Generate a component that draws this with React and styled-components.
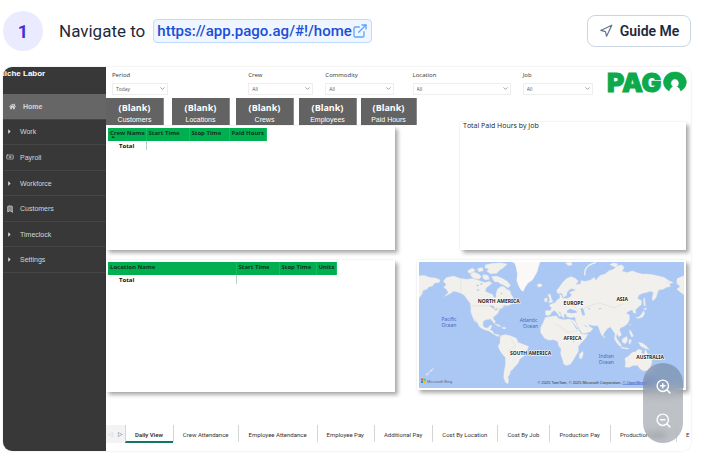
import styled, { createGlobalStyle } from "styled-components";
import { ExternalLink, Navigation, ZoomIn, ZoomOut, Bookmark, Banknote, ChevronDown } from "lucide-react";
import { FaHome, FaCaretRight } from "react-icons/fa";

const GlobalStyle = createGlobalStyle`
  * { box-sizing: border-box; }
  body {
    margin: 0;
    background: #fff;
    font-family: Roboto, "Liberation Sans", sans-serif;
  }
  button, select { font-family: inherit; }
`;

const Page = styled.main`
  padding: 11px 14px 12px 3px;
`;

const StepHeader = styled.header`
  display: flex;
  align-items: center;
  height: 40px;
  margin-bottom: 16px;
`;

const StepNumber = styled.span`
  display: flex;
  align-items: center;
  justify-content: center;
  width: 40px;
  height: 40px;
  border-radius: 50%;
  background: #ebebff;
  color: #4330d8;
  font-size: 18px;
  font-weight: 700;
`;

const StepTitle = styled.h1`
  flex: 1;
  display: flex;
  align-items: center;
  gap: 8px;
  margin: 0 0 0 16px;
  color: #1e293b;
  font-size: 17px;
  font-weight: 400;
`;

const UrlLink = styled.a`
  display: flex;
  align-items: center;
  height: 24px;
  padding: 0 3px;
  border: 1px solid #bfdbfe;
  border-radius: 4px;
  background: #eff6ff;
  color: #1d4ed8;
  font-size: 15px;
  font-weight: 500;
  text-decoration: none;

  svg { color: #60a5fa; }
`;

const GuideButton = styled.button`
  display: flex;
  align-items: center;
  justify-content: center;
  gap: 7px;
  width: 104px;
  height: 32px;
  padding: 0;
  border: 1px solid #cbd5e1;
  border-radius: 8px;
  background: #fff;
  color: #1e293b;
  font-size: 14px;
  font-weight: 600;

  svg { color: #64748b; }
`;

const Shot = styled.section`
  position: relative;
  display: flex;
  border-radius: 9px;
  overflow: hidden;
  box-shadow: 0 0 2px rgba(0, 0, 0, 0.15);
`;

const Sidebar = styled.nav`
  flex: none;
  width: 103px;
  background: #383838;
  font-family: "Liberation Sans", Arial, sans-serif;
`;

const Company = styled.div`
  height: 27px;
  margin-left: -4px;
  padding-top: 2px;
  color: #fff;
  font-size: 8px;
  font-weight: 700;
  line-height: 9px;
`;

const Menu = styled.ul`
  display: flex;
  flex-direction: column;
  height: 179px;
  margin: 0;
  padding: 0;
  list-style: none;
`;

const MenuItem = styled.li`
  flex: 1;
  border-bottom: 1px solid #454545;
  background: ${(p) => (p.$active ? "#666" : "transparent")};
`;

const MenuLink = styled.a`
  display: flex;
  align-items: center;
  gap: 6px;
  height: 100%;
  padding-left: ${(p) => (p.$active ? "6px" : "3px")};
  color: #d6d6d6;
  font-size: 7px;
  font-weight: ${(p) => (p.$active ? 700 : 400)};
  text-decoration: none;
`;

const MenuIcon = styled.span`
  display: flex;
  width: 8px;
`;

const Report = styled.div`
  flex: 1;
  min-width: 0;
  display: flex;
  flex-direction: column;
  background: #fff;
  font-family: "Open Sans", "Noto Sans", sans-serif;
`;

const Slicers = styled.div`
  display: grid;
  grid-template-columns: 136fr 77fr 87fr 110fr 85fr 78fr;
  height: 31px;
  padding: 4px 5px 0 6px;
`;

const Slicer = styled.label`
  display: block;
  position: relative;
  width: ${(p) => p.$width};
  color: #333;
  font-size: 6px;
  line-height: 9px;

  svg {
    position: absolute;
    right: 2px;
    bottom: 6px;
    pointer-events: none;
  }
`;

const SlicerSelect = styled.select`
  display: block;
  width: 100%;
  height: 12px;
  margin-top: 3px;
  padding: 0 3px;
  appearance: none;
  border: 1px solid #eee;
  border-radius: 0;
  background: #fff;
  color: #555;
  font-size: 5px;
`;

const Body = styled.div`
  display: grid;
  grid-template-columns: 311fr 274fr;
`;

const Column = styled.div`
  display: flex;
  flex-direction: column;
  gap: 10px;
`;

const RightColumn = styled(Column)`
  padding: 24px 5px 0 0;
`;

const Tiles = styled.div`
  display: grid;
  grid-template-columns: 66fr 64fr 63fr 62fr 56fr;
  margin-bottom: -9px;
`;

const Tile = styled.div`
  display: flex;
  flex-direction: column;
  align-items: center;
  max-width: 58px;
  height: 27px;
  padding-top: 3px;
  border-right: 1px solid #8a8a8a;
  background: #636363;
  color: #fff;
  font-family: "Liberation Sans", Arial, sans-serif;
  font-size: 7px;
  line-height: 11px;
  overflow: hidden;

  strong {
    font-family: "Open Sans", sans-serif;
    font-size: 9px;
    line-height: 13px;
  }
`;

const Panel = styled.div`
  width: ${(p) => p.$width || "100%"};
  height: ${(p) => p.$height || "auto"};
  padding: 2px;
  background: #fff;
  box-shadow: 3px 3px 4px rgba(0, 0, 0, 0.32), 0 0 2px rgba(0, 0, 0, 0.1);
`;

const ChartPanel = styled(Panel)`
  align-self: flex-end;
  padding: 0 3px;
`;

const ChartTitle = styled.h2`
  margin: 0;
  color: #222;
  font-size: 7px;
  font-weight: 400;
  line-height: 8px;
`;

const DataTable = styled.table`
  border-collapse: collapse;
  table-layout: fixed;
  width: ${(p) => p.$width};
  color: #111;
  font-size: 6px;
  line-height: 8px;
`;

const HeadCell = styled.th`
  width: ${(p) => p.$width};
  height: 13px;
  padding: 1px 2px;
  border-right: 1px solid #12bb5e;
  background: #00b050;
  color: #12351f;
  text-align: left;
  vertical-align: top;
  white-space: nowrap;
`;

const SortMark = styled.span`
  display: block;
  width: 0;
  margin-top: -1px;
  margin-left: 1px;
  border: 2px solid transparent;
  border-top: 0;
  border-bottom-color: #12351f;
`;

const TotalCell = styled.th`
  height: 9px;
  padding: 0 0 0 11px;
  border-right: 1px solid #b8d4c4;
  text-align: left;
`;

const Logo = styled.svg`
  display: block;
  width: 100%;
  overflow: visible;
`;

const Map = styled.svg`
  display: block;
  width: 100%;
  background: #abc7f3;
`;

const Tabs = styled.div`
  display: flex;
  height: 18px;
  margin: 33px 0 8px;
  overflow: hidden;
`;

const Pager = styled.div`
  flex: none;
  display: flex;
  align-items: center;
  justify-content: space-around;
  width: 19px;
  background: #f3f3f3;
`;

const PagerButton = styled.button`
  padding: 0;
  border: 0;
  background: none;
  color: ${(p) => (p.disabled ? "#ccc" : "#555")};
  font-size: 6px;
`;

const Tab = styled.button`
  flex: none;
  padding: 2px 10px 0 9px;
  border: 0;
  border-left: 1px solid #d5d5d5;
  border-bottom: 2px solid ${(p) => (p.$active ? "#117865" : "transparent")};
  background: #fff;
  color: #333;
  font-family: Roboto, "Liberation Sans", sans-serif;
  font-size: 6px;
  font-weight: ${(p) => (p.$active ? 600 : 400)};
  white-space: nowrap;
`;

const ZoomBar = styled.div`
  position: absolute;
  right: 8px;
  bottom: 8px;
  display: flex;
  flex-direction: column;
  width: 40px;
  height: 80px;
  border-radius: 20px;
  background: rgba(75, 85, 99, 0.36);
  backdrop-filter: blur(4px);
  overflow: hidden;
`;

const ZoomButton = styled.button`
  flex: 1;
  display: flex;
  align-items: center;
  justify-content: center;
  padding: 6px 0 0;
  border: 0;
  background: none;
  color: #fff;

  & + & { padding: 0 0 6px; }
`;

const menu = [
  { label: "Home", icon: <FaHome size={7} />, active: true },
  { label: "Work", icon: <FaCaretRight size={7} /> },
  { label: "Payroll", icon: <Banknote size={8} /> },
  { label: "Workforce", icon: <FaCaretRight size={7} /> },
  { label: "Customers", icon: <Bookmark size={8} fill="#888" /> },
  { label: "Timeclock", icon: <FaCaretRight size={7} /> },
  { label: "Settings", icon: <FaCaretRight size={7} /> },
];

const slicers = [
  { label: "Period", value: "Today", width: "41%" },
  { label: "Crew", value: "All", width: "84%" },
  { label: "Commodity", value: "All", width: "79%" },
  { label: "Location", value: "All", width: "89%" },
  { label: "Job", value: "All", width: "83%" },
];

const tiles = ["Customers", "Locations", "Crews", "Employees", "Paid Hours"];

const tabs = [
  "Daily View",
  "Crew Attendance",
  "Employee Attendance",
  "Employee Pay",
  "Additional Pay",
  "Cost By Location",
  "Cost By Job",
  "Production Pay",
  "Production Detail",
  "E",
];

const crewColumns = [
  ["Crew Name", "38px"],
  ["Start Time", "43px"],
  ["Stop Time", "40px"],
  ["Paid Hours", "37px"],
];

const locationColumns = [
  ["Location Name", "128px"],
  ["Start Time", "43px"],
  ["Stop Time", "37px"],
  ["Units", "20px"],
];

function TotalsTable({ columns, width, sorted }) {
  return (
    <DataTable $width={width}>
      <thead>
        <tr>
          {columns.map(([name, w], i) => (
            <HeadCell key={name} $width={w} scope="col">
              {name}
              {sorted && i === 0 && <SortMark />}
            </HeadCell>
          ))}
        </tr>
      </thead>
      <tbody>
        <tr>
          <TotalCell scope="row">Total</TotalCell>
          <td colSpan={3}></td>
        </tr>
      </tbody>
    </DataTable>
  );
}

function PagoLogo() {
  return (
    <Logo viewBox="0 0 80 22" role="img" aria-label="PAGO">
      <text x="-1" y="21" fontFamily="Inter, sans-serif" fontSize="27" fontWeight="900" fill="#0caa4b" stroke="#0caa4b" strokeWidth="1">PAG</text>
      <path
        d="M68.500 1 A11.500 10.500 0 0 1 77.500 18.200 L74.500 20.500 Q74 17.500 71 15.800 A4.200 4.200 0 1 0 66 15.800 Q63 17.500 62.500 20.500 L59.500 18.200 A11.500 10.500 0 0 1 68.500 1z"
        fill="#0caa4b"
        stroke="#0caa4b"
        strokeWidth="0.5"
      />
    </Logo>
  );
}

function WorldMap() {
  return (
    <Map viewBox="0 0 266 126" role="img" aria-label="World map">
      <g transform="translate(-8 -12) scale(0.3333)" fill="#f1f0ec" stroke="#dfe3e6" strokeWidth="1">
        <path d="M20 78 L40 76 55 82 75 84 88 90 85 98 70 100 65 108 52 112 48 118 36 122 34 132 20 150Z" />
        <path d="M97 95 L106 83 128 78 148 85 168 88 186 86 205 92 222 98 236 94 244 100 234 108 226 114 224 124 236 130 246 134 250 144 256 142 256 130 260 118 270 110 280 110 288 118 298 122 302 134 308 144 298 150 288 154 300 156 302 164 290 168 280 166 276 174 266 180 262 190 256 196 248 202 248 208 254 214 252 222 246 216 240 208 226 210 218 214 216 226 222 234 232 234 238 226 244 228 238 240 246 244 250 252 262 254 268 260 260 260 246 252 234 244 220 240 206 232 200 220 192 208 196 220 190 212 184 198 180 188 180 172 178 160 170 150 160 136 150 130 140 126 128 124 118 132 100 140 112 128 106 118 98 112 106 104Z" />
        <path d="M178 72 L190 66 204 72 212 80 204 88 190 86 182 80Z" />
        <path d="M170 62 L184 54 194 60 186 68 174 70Z M200 56 L214 52 218 62 204 66Z M216 74 L232 76 236 88 224 90 216 84Z" />
        <path d="M224 44 L246 40 270 38 290 42 280 52 268 60 258 70 240 72 228 64 234 56 222 54Z" />
        <path d="M242 80 L258 78 276 86 290 94 300 106 292 114 280 106 270 102 262 96 252 96Z" />
        <path d="M300 34 L312 40 316 52 320 72 318 92 324 108 332 122 338 125 344 112 352 100 366 90 372 80 380 66 384 50 390 34Z" fill="#faf9f7" />
        <path d="M379 105 L386 101 395 104 393 110 384 112Z" />
        <path d="M250 222 L262 224 272 230 264 230Z M275 232 L286 233 284 238 276 237Z M304 156 L313 158 308 164Z" />
        <path d="M270 258 L284 254 300 258 318 266 322 278 338 284 354 290 352 298 344 308 340 320 328 328 322 342 312 352 306 360 300 364 298 374 292 382 294 392 292 403 284 398 279 384 280 366 284 346 284 324 274 312 266 300 262 288 268 280 268 268Z" />
        <path d="M68 355 L62 365 56 365Z M58 366 L47 378 45 375Z" />
      </g>
      <g transform="translate(132 -12) scale(0.3333)" fill="#f1f0ec" stroke="#dfe3e6" strokeWidth="1">
        <path d="M-15 182 L0 182 3 174 -5 166 4 162 14 158 20 150 28 145 28 134 34 136 36 144 48 146 58 142 64 134 56 128 66 124 76 120 64 116 56 120 50 128 48 138 40 142 34 130 22 132 18 122 26 112 36 98 48 86 62 80 76 86 84 94 76 104 90 102 92 92 106 94 120 90 132 82 136 92 142 84 150 76 164 72 176 62 190 58 200 48 214 44 222 52 216 64 232 68 246 62 260 68 276 72 292 72 306 74 326 78 342 82 356 92 370 98 358 102 362 110 350 112 340 118 326 120 322 130 318 144 308 154 306 142 310 128 300 124 290 128 278 130 266 136 262 146 274 152 274 164 264 172 256 180 258 190 250 190 246 180 236 184 228 190 238 196 238 210 232 222 222 230 212 234 208 240 214 256 206 262 200 252 198 262 204 278 208 290 200 280 194 268 194 252 186 240 180 232 172 236 164 246 156 260 150 248 146 236 142 228 128 228 114 224 118 230 128 236 120 246 100 252 94 250 86 236 76 216 74 202 60 204 48 200 46 192 40 196 42 206 34 200 30 188 22 184 32 196 28 202 20 190 12 182 4 186 0 194 -8 198 -16 194Z" />
        <path d="M-16 203 L0 200 18 198 24 206 40 210 56 208 72 212 78 222 84 238 92 252 104 254 113 252 106 266 94 278 84 290 84 306 76 318 70 330 60 344 48 348 40 344 36 330 30 312 32 298 24 288 22 276 10 270 -4 272 -18 266 -30 248 -30 234 -22 218Z" />
        <path d="M97 304 L99 312 94 327 87 327 87 314Z" />
        <path d="M-8 133 L0 133 2 144 8 156 -6 160 -2 150Z M-18 146 L-10 144 -10 156 -18 156Z" />
        <path d="M190 262 L200 268 212 284 214 292 206 286 196 274Z M216 268 L230 260 232 272 226 282 216 278Z M212 292 L236 296 234 299 214 296Z M236 270 L244 270 240 284 236 282Z M238 240 L244 246 250 260 244 262 238 250Z" />
        <path d="M264 278 L276 280 288 288 298 300 284 296 272 290Z M160 256 L164 262 161 266Z M238 228 L240 222 242 224Z" />
        <path d="M256 204 L268 200 276 190 280 182 284 190 278 202 266 206Z M280 176 L290 174 286 182Z M280 146 L284 144 286 168 281 168Z" />
        <path d="M224 326 L236 318 246 308 256 306 264 299 276 302 274 310 282 314 286 299 291 310 299 322 306 336 302 350 294 362 280 364 270 358 262 348 250 348 236 354 224 352 226 340Z" />
        <path d="M381 86 L390 82 402 77 V135 L392 128 380 118 390 110 380 100Z M350 94 L358 96 352 100Z" />
        <path d="M104 76 Q100 58 116 46 Q126 40 137 38" fill="none" stroke="#f1f0ec" strokeWidth="4" />
        <path d="M178 44 L190 38 204 42 196 52Z M44 38 L62 36 66 44 54 48Z" />
      </g>
      {/* inland seas and lakes */}
      <g transform="translate(132 -12) scale(0.3333)" fill="#abc7f3">
        <path d="M50 182 Q60 174 66 180 Q80 182 80 188 Q66 192 50 188Z M90 176 Q98 172 100 180 L104 196 Q96 200 94 190Z" />
        <path d="M112 176 L118 174 118 180Z M144 176 L156 174 148 179Z M206 148 L218 140 210 150Z M98 222 L112 232 108 232Z M60 208 L82 238 78 238Z M66 272 L72 272 70 279Z" />
      </g>
      <g transform="translate(-8 -12) scale(0.3333)" fill="#abc7f3">
        <path d="M236 168 L248 168 252 178 244 174Z M196 104 L206 106 200 110Z M198 118 L208 120 200 123Z M222 144 L226 154 222 154Z M250 178 L264 176 256 182Z" />
        <path d="M210 98 L216 102 210 106Z M270 128 L276 130 272 134Z" />
      </g>
      <g stroke="#d9d8d6" strokeWidth="0.5" fill="none">
        <path d="M52 44 H73 L80 47 L87 45" />
        <path d="M42 17 V30 M154 43 L160 49 M166 46 L180 41 L196 46 L205 42 M137 62 L150 71 L161 68 M92 77 L97 84 L89 90" />
      </g>
      <g fontFamily="Noto Sans, sans-serif" fontSize="5" fontWeight="700" fill="#222" stroke="#fff" strokeWidth="1" paintOrder="stroke" textAnchor="middle">
        <text x="80" y="41">NORTH AMERICA</text>
        <text x="112" y="93">SOUTH AMERICA</text>
        <text x="155" y="43">EUROPE</text>
        <text x="204" y="39">ASIA</text>
        <text x="154" y="78">AFRICA</text>
        <text x="232" y="97">AUSTRALIA</text>
      </g>
      <g fontFamily="Noto Sans, sans-serif" fontSize="5" fill="#4a68c4" textAnchor="middle">
        <text x="30" y="59">Pacific</text>
        <text x="30" y="65">Ocean</text>
        <text x="110" y="60">Atlantic</text>
        <text x="112" y="66">Ocean</text>
        <text x="188" y="96">Indian</text>
        <text x="188" y="102">Ocean</text>
      </g>
      <path d="M2 117h2v2h-2z" fill="#f25022" />
      <path d="M4.500 117h2v2h-2z" fill="#7fba00" />
      <path d="M2 119.500h2v2h-2z" fill="#00a4ef" />
      <path d="M4.500 119.500h2v2h-2z" fill="#ffb900" />
      <g fontFamily="Liberation Sans, sans-serif" fontSize="4" fill="#333">
        <text x="8" y="121" fill="#667">Microsoft Bing</text>
        <text x="119" y="122">© 2025 TomTom, © 2025 Microsoft Corporation, <tspan fill="#2546b8" textDecoration="underline">© OpenStreetMap</tspan></text>
      </g>
    </Map>
  );
}

export default function App() {
  return (
    <>
      <GlobalStyle />
      <Page>
        <StepHeader>
          <StepNumber>1</StepNumber>
          <StepTitle>
            Navigate to
            <UrlLink href="https://app.pago.ag/#!/home">
              https://app.pago.ag/#!/home
              <ExternalLink size={16} />
            </UrlLink>
          </StepTitle>
          <GuideButton type="button">
            <Navigation size={14} />
            Guide Me
          </GuideButton>
        </StepHeader>

        <Shot>
          <Sidebar>
            <Company>Niche Labor</Company>
            <Menu>
              {menu.map((item) => (
                <MenuItem key={item.label} $active={item.active}>
                  <MenuLink href="#" $active={item.active}>
                    <MenuIcon>{item.icon}</MenuIcon>
                    {item.label}
                  </MenuLink>
                </MenuItem>
              ))}
            </Menu>
          </Sidebar>

          <Report>
            <Slicers>
              {slicers.map((s) => (
                <Slicer key={s.label} $width={s.width}>
                  {s.label}
                  <SlicerSelect defaultValue={s.value}>
                    <option>{s.value}</option>
                  </SlicerSelect>
                  <ChevronDown size={7} color="#666" />
                </Slicer>
              ))}
              <PagoLogo />
            </Slicers>

            <Body>
              <Column>
                <Tiles>
                  {tiles.map((name) => (
                    <Tile key={name}>
                      <strong>(Blank)</strong>
                      {name}
                    </Tile>
                  ))}
                </Tiles>
                <Panel $width="93%" $height="124px">
                  <TotalsTable columns={crewColumns} width="158px" sorted />
                </Panel>
                <Panel $width="93%" $height="132px">
                  <TotalsTable columns={locationColumns} width="228px" />
                </Panel>
              </Column>
              <RightColumn>
                <ChartPanel $width="84%" $height="128px">
                  <ChartTitle>Total Paid Hours by Job</ChartTitle>
                </ChartPanel>
                <Panel>
                  <WorldMap />
                </Panel>
              </RightColumn>
            </Body>

            <Tabs>
              <Pager>
                <PagerButton disabled aria-label="Previous page">◁</PagerButton>
                <PagerButton aria-label="Next page">▷</PagerButton>
              </Pager>
              {tabs.map((name, i) => (
                <Tab key={name} type="button" $active={i === 0}>{name}</Tab>
              ))}
            </Tabs>
          </Report>

          <ZoomBar>
            <ZoomButton aria-label="Zoom in"><ZoomIn size={17} /></ZoomButton>
            <ZoomButton aria-label="Zoom out"><ZoomOut size={17} /></ZoomButton>
          </ZoomBar>
        </Shot>
      </Page>
    </>
  );
}
